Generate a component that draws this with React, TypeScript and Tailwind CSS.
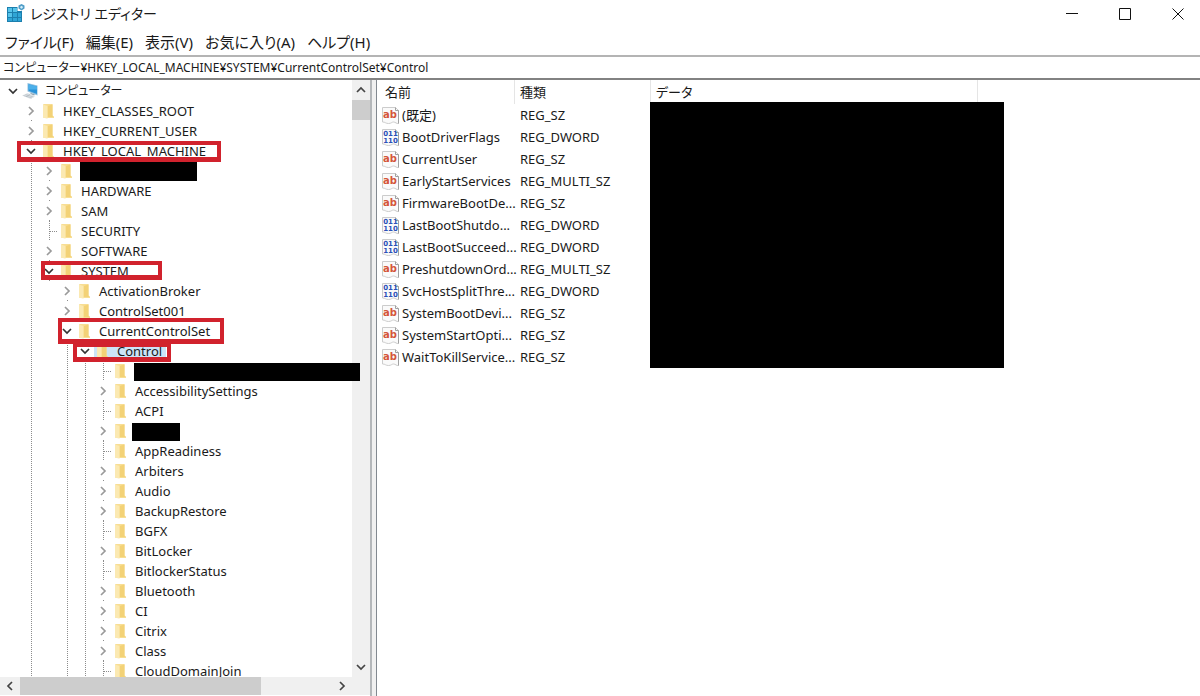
import { useState } from "react";

type TreeNode = {
  name: string;
  level: number;
  state: "open" | "closed" | "leaf";
  guides?: number[];
  selected?: boolean;
  redacted?: string;
  mark?: string;
};

type RegistryValue = {
  name: string;
  type: "REG_SZ" | "REG_DWORD" | "REG_MULTI_SZ";
};

const MENU = ["ファイル(F)", "編集(E)", "表示(V)", "お気に入り(A)", "ヘルプ(H)"];

const DEEP = [1, 3, 4];

const NODES: TreeNode[] = [
  { name: "コンピューター", level: 0, state: "open" },
  { name: "HKEY_CLASSES_ROOT", level: 1, state: "closed" },
  { name: "HKEY_CURRENT_USER", level: 1, state: "closed" },
  {
    name: "HKEY_LOCAL_MACHINE",
    level: 1,
    state: "open",
    mark: "left-[17px] w-[204px] top-0 h-[21px]",
  },
  {
    name: "",
    level: 2,
    state: "closed",
    guides: [1],
    redacted: "left-[80px] w-[117px] top-px h-[19px]",
  },
  { name: "HARDWARE", level: 2, state: "closed", guides: [1] },
  { name: "SAM", level: 2, state: "closed", guides: [1] },
  { name: "SECURITY", level: 2, state: "leaf", guides: [1] },
  { name: "SOFTWARE", level: 2, state: "closed", guides: [1] },
  {
    name: "SYSTEM",
    level: 2,
    state: "open",
    guides: [1],
    mark: "left-[41px] w-[121px] top-0 h-[19px]",
  },
  { name: "ActivationBroker", level: 3, state: "closed", guides: [1] },
  { name: "ControlSet001", level: 3, state: "closed", guides: [1] },
  {
    name: "CurrentControlSet",
    level: 3,
    state: "open",
    guides: [1],
    mark: "left-[58px] w-[166px] -top-[3px] h-[26px]",
  },
  {
    name: "Control",
    level: 4,
    state: "open",
    guides: [1, 3],
    selected: true,
    mark: "left-[73px] w-[98px] top-[2px] h-[19px]",
  },
  {
    name: "",
    level: 5,
    state: "leaf",
    guides: DEEP,
    redacted: "left-[134px] w-[226px] top-[2px] h-[18px]",
  },
  { name: "AccessibilitySettings", level: 5, state: "closed", guides: DEEP },
  { name: "ACPI", level: 5, state: "leaf", guides: DEEP },
  {
    name: "",
    level: 5,
    state: "closed",
    guides: DEEP,
    redacted: "left-[132px] w-[48px] top-[2px] h-[18px]",
  },
  { name: "AppReadiness", level: 5, state: "leaf", guides: DEEP },
  { name: "Arbiters", level: 5, state: "closed", guides: DEEP },
  { name: "Audio", level: 5, state: "closed", guides: DEEP },
  { name: "BackupRestore", level: 5, state: "closed", guides: DEEP },
  { name: "BGFX", level: 5, state: "leaf", guides: DEEP },
  { name: "BitLocker", level: 5, state: "closed", guides: DEEP },
  { name: "BitlockerStatus", level: 5, state: "leaf", guides: DEEP },
  { name: "Bluetooth", level: 5, state: "closed", guides: DEEP },
  { name: "CI", level: 5, state: "closed", guides: DEEP },
  { name: "Citrix", level: 5, state: "closed", guides: DEEP },
  { name: "Class", level: 5, state: "closed", guides: DEEP },
  { name: "CloudDomainJoin", level: 5, state: "leaf", guides: DEEP },
];

const VALUES: RegistryValue[] = [
  { name: "(既定)", type: "REG_SZ" },
  { name: "BootDriverFlags", type: "REG_DWORD" },
  { name: "CurrentUser", type: "REG_SZ" },
  { name: "EarlyStartServices", type: "REG_MULTI_SZ" },
  { name: "FirmwareBootDe...", type: "REG_SZ" },
  { name: "LastBootShutdo...", type: "REG_DWORD" },
  { name: "LastBootSucceed...", type: "REG_DWORD" },
  { name: "PreshutdownOrd...", type: "REG_MULTI_SZ" },
  { name: "SvcHostSplitThre...", type: "REG_DWORD" },
  { name: "SystemBootDevi...", type: "REG_SZ" },
  { name: "SystemStartOpti...", type: "REG_SZ" },
  { name: "WaitToKillService...", type: "REG_SZ" },
];

const RegeditIcon = () => (
  <svg width="19" height="19" viewBox="0 0 19 19" aria-hidden="true">
    <path d="M1 3h10.500v4H16v11H1z" fill="#1c7fae" />
    <path
      d="M2 4h4v4H2zM7 4h4v4H7zM2 9h4v4H2zM7 9h4v4H7zM12 9h3v4h-3zM2 14h4v3H2zM7 14h4v3H7zM12 14h3v3h-3z"
      fill="#2fa5d6"
    />
    <path d="M2 4h4v4H2zM7 4h4v4H7zM2 9h4v4H2z" fill="#55c3ea" />
    <path d="M15.500 0l3 1.500v3l-3 2-3-2v-3z" fill="#4f9dc8" />
    <path d="M15.500 1.800l1.300 1v1l-1.300 1-1.300-1v-1z" fill="#d4effa" />
  </svg>
);

const ComputerIcon = () => (
  <svg width="18" height="18" viewBox="0 0 18 18" aria-hidden="true">
    <path d="M5.500 1l10 2.500v10l-10-4z" fill="#8fbfdf" />
    <path d="M6.500 2.200l8.500 2.200v7.600L6.500 8.800z" fill="#2b93d8" />
    <path d="M6.500 2.200l8.500 2.200v3l-8.500 0z" fill="#4cb0ea" />
    <path d="M9 11l4 1.500-1 1-4-1.500z" fill="#8fa3b0" />
    <path d="M0 13.500l5.500-2.500 8 3-5 3z" fill="#dfe4e8" />
    <path
      d="M1.500 13.500l8.500 2.500M3.500 12.500l8 2.500M4 14.700l4-2.400"
      stroke="#aab3ba"
      strokeWidth=".6"
    />
  </svg>
);

const FolderIcon = () => (
  <svg width="18" height="18" viewBox="0 0 18 18" aria-hidden="true">
    <path d="M3 2.500L4 2h8.500v11.500l1.500 1v1.500H5l-2-.5z" fill="#f8de94" />
    <path d="M7.500 4l5-1.500v11L13 15H7.500z" fill="#f3d277" />
    <path d="M3 2.500L7.500 4v12.800L3 15.500z" fill="#fbe9b2" />
  </svg>
);

const Page = () => (
  <>
    <path
      d="M.5 1.500h13l3 3v13c-2 .5-3-1.500-5-1.500s-2 1.500-5 1.500-3-1.500-6-1.500z"
      fill="#fafafa"
      stroke="#cccccc"
    />
    <path d="M13.500 1.500v3h3v13" fill="none" stroke="#a0a0a0" />
  </>
);

const ValueIcon = ({ type }: { type: RegistryValue["type"] }) => (
  <svg
    width="18"
    height="19"
    viewBox="0 0 18 19"
    className="shrink-0"
    aria-hidden="true"
  >
    <Page />
    {type === "REG_DWORD" ? (
      <g
        fill="#2a50b8"
        fontFamily="DejaVu Sans"
        fontWeight="bold"
        fontSize="7"
        textAnchor="middle"
      >
        <text x="8.500" y="8">
          011
        </text>
        <text x="8.500" y="15">
          110
        </text>
      </g>
    ) : (
      <text
        x="8"
        y="12"
        fill="#d4553a"
        fontFamily="DejaVu Sans"
        fontWeight="bold"
        fontSize="10"
        textAnchor="middle"
      >
        ab
      </text>
    )}
  </svg>
);

const Chevron = ({ dir }: { dir: "up" | "down" | "left" | "right" }) => {
  const paths = {
    up: "M1 7l4-4 4 4",
    down: "M1 3l4 4 4-4",
    left: "M7 1L3 5l4 4",
    right: "M3 1l4 4-4 4",
  };
  return (
    <svg width="10" height="10" viewBox="0 0 10 10" aria-hidden="true">
      <path
        d={paths[dir]}
        fill="none"
        stroke="currentColor"
        strokeWidth="1.700"
      />
    </svg>
  );
};

// Dotted connector on the left of a row
const Connector = ({ kind }: { kind: "guide" | "leaf" | "none" }) => (
  <svg width="18" height="20" viewBox="0 0 18 20" aria-hidden="true">
    {kind !== "none" && (
      <path
        d="M9.500 0v20"
        stroke="#8c8c8c"
        strokeDasharray="1 1"
        shapeRendering="crispEdges"
      />
    )}
    {kind === "leaf" && (
      <path
        d="M10 10.500h8"
        stroke="#8c8c8c"
        strokeDasharray="1 1"
        shapeRendering="crispEdges"
      />
    )}
  </svg>
);

const TreeRow = ({
  node,
  selected,
  onSelect,
}: {
  node: TreeNode;
  selected: boolean;
  onSelect: () => void;
}) => {
  const { name, level, state, guides = [], redacted, mark } = node;
  return (
    <li
      role="treeitem"
      aria-level={level + 1}
      aria-selected={selected}
      className="relative flex h-5 items-center pl-1"
    >
      {Array.from({ length: level }, (_, i) => (
        <Connector key={i} kind={guides.includes(i) ? "guide" : "none"} />
      ))}
      {state === "leaf" ? (
        <Connector kind="leaf" />
      ) : (
        <button
          aria-label={state === "open" ? "折りたたむ" : "展開"}
          className={`flex h-5 w-[18px] flex-col items-center justify-between ${
            state === "open" ? "text-[#333333]" : "text-[#9a9a9a]"
          }`}
        >
          <span className="size-px" />
          <Chevron dir={state === "open" ? "down" : "right"} />
          <span className={level > 0 ? "size-px bg-[#8c8c8c]" : "size-px"} />
        </button>
      )}
      <button
        onClick={onSelect}
        className={`flex h-5 items-center gap-[5px] pr-1 whitespace-nowrap ${
          selected ? "bg-[#cce4f7]" : ""
        }`}
      >
        {level === 0 ? <ComputerIcon /> : <FolderIcon />}
        <span className={level === 0 ? "text-[12px]/5" : ""}>{name}</span>
      </button>
      {redacted && <span className={`absolute z-10 bg-black ${redacted}`} />}
      {mark && (
        <span
          className={`pointer-events-none absolute z-20 border-4 border-b-[5px] border-[#d1222d] ${mark}`}
        />
      )}
    </li>
  );
};

const KeyTree = () => {
  const [current, setCurrent] = useState(
    NODES.findIndex((node) => node.selected)
  );
  return (
    <nav className="flex w-[370px] shrink-0 flex-col">
      <div className="flex min-h-0 flex-1">
        <ul
          role="tree"
          className="relative z-10 min-w-0 flex-1 overflow-x-visible overflow-y-clip pt-px"
        >
          {NODES.map((node, i) => (
            <TreeRow
              key={i}
              node={node}
              selected={i === current}
              onSelect={() => setCurrent(i)}
            />
          ))}
        </ul>
        <div className="flex w-[18px] flex-col bg-[#f0f0f0] text-[#444444]">
          <button
            aria-label="上へ"
            className="flex h-5 items-center justify-center"
          >
            <Chevron dir="up" />
          </button>
          <div className="h-5 bg-[#cdcdcd]" />
          <button
            aria-label="下へ"
            className="mt-auto flex h-5 items-center justify-center"
          >
            <Chevron dir="down" />
          </button>
        </div>
      </div>
      <div className="mb-px flex h-[18px] bg-[#f0f0f0] pr-[18px] text-[#444444]">
        <button
          aria-label="左へ"
          className="flex w-5 items-center justify-center"
        >
          <Chevron dir="left" />
        </button>
        <div className="w-[241px] bg-[#cdcdcd]" />
        <button
          aria-label="右へ"
          className="ml-auto flex w-5 items-center justify-center"
        >
          <Chevron dir="right" />
        </button>
      </div>
    </nav>
  );
};

const ValueTable = () => (
  <main className="min-w-0 flex-1 overflow-hidden">
    <table className="w-full table-fixed border-separate border-spacing-0 text-left">
      <colgroup>
        <col className="w-[138px]" />
        <col className="w-[136px]" />
        <col className="w-[327px]" />
        <col />
      </colgroup>
      <thead>
        <tr className="h-6">
          <th className="border-r border-[#e5e5e5] p-0 pl-2 font-normal">
            名前
          </th>
          <th className="border-r border-[#e5e5e5] p-0 pl-[5px] font-normal">
            種類
          </th>
          <th className="relative border-r border-[#e5e5e5] p-0 pl-[5px] font-normal">
            データ
            <span className="absolute top-[22px] -left-px h-[266px] w-[354px] bg-black" />
          </th>
          <th />
        </tr>
      </thead>
      <tbody>
        {VALUES.map(({ name, type }) => (
          <tr key={name} className="h-[22px]">
            <td className="p-0">
              <div className="flex h-[22px] items-center gap-[2px] pl-[5px] whitespace-nowrap">
                <ValueIcon type={type} />
                <span>{name}</span>
              </div>
            </td>
            <td className="p-0 pl-[5px]">{type}</td>
            <td />
            <td />
          </tr>
        ))}
      </tbody>
    </table>
  </main>
);

const TitleBar = () => (
  <header className="flex h-[27px] items-center pl-[6px] text-sm">
    <RegeditIcon />
    <h1 className="ml-[5px]">レジストリ エディター</h1>
    <div className="ml-auto flex h-full">
      <button
        aria-label="最小化"
        className="flex w-[53px] items-center justify-center"
      >
        <svg width="12" height="12" viewBox="0 0 12 12">
          <path d="M0 5.500h12" stroke="#111111" />
        </svg>
      </button>
      <button
        aria-label="最大化"
        className="flex w-[53px] items-center justify-center"
      >
        <svg width="12" height="12" viewBox="0 0 12 12">
          <path d="M.5.5h11v11H.5z" fill="none" stroke="#111111" />
        </svg>
      </button>
      <button
        aria-label="閉じる"
        className="flex w-[49px] items-center justify-center pl-1"
      >
        <svg width="12" height="12" viewBox="0 0 12 12">
          <path d="M.5.5l11 11M11.500.5l-11 11" stroke="#111111" />
        </svg>
      </button>
    </div>
  </header>
);

export default function App() {
  return (
    <div className="flex h-screen flex-col overflow-hidden bg-white font-['Noto_Sans','Noto_Sans_CJK_JP',sans-serif] text-[13px] leading-5 text-[#1a1a1a] [font-feature-settings:'palt']">
      <TitleBar />
      <div
        role="menubar"
        className="flex h-7 items-center gap-3 pt-[2px] pl-[5px] text-[15px]"
      >
        {MENU.map((label) => (
          <button key={label} role="menuitem">
            {label}
          </button>
        ))}
      </div>
      <div className="flex h-[25px] items-center border-t-2 border-b-2 border-t-[#b4b4b4] border-b-[#828282]">
        <input
          aria-label="アドレス"
          className="h-5 w-full pl-[3px] text-[12px] outline-none"
          defaultValue="コンピューター¥HKEY_LOCAL_MACHINE¥SYSTEM¥CurrentControlSet¥Control"
        />
      </div>
      <div className="flex min-h-0 flex-1">
        <KeyTree />
        <div className="w-[7px] shrink-0 cursor-col-resize border-r border-l-2 border-r-[#828990] border-l-[#b4b7ba] bg-[#f0f0f0]" />
        <ValueTable />
      </div>
    </div>
  );
}
